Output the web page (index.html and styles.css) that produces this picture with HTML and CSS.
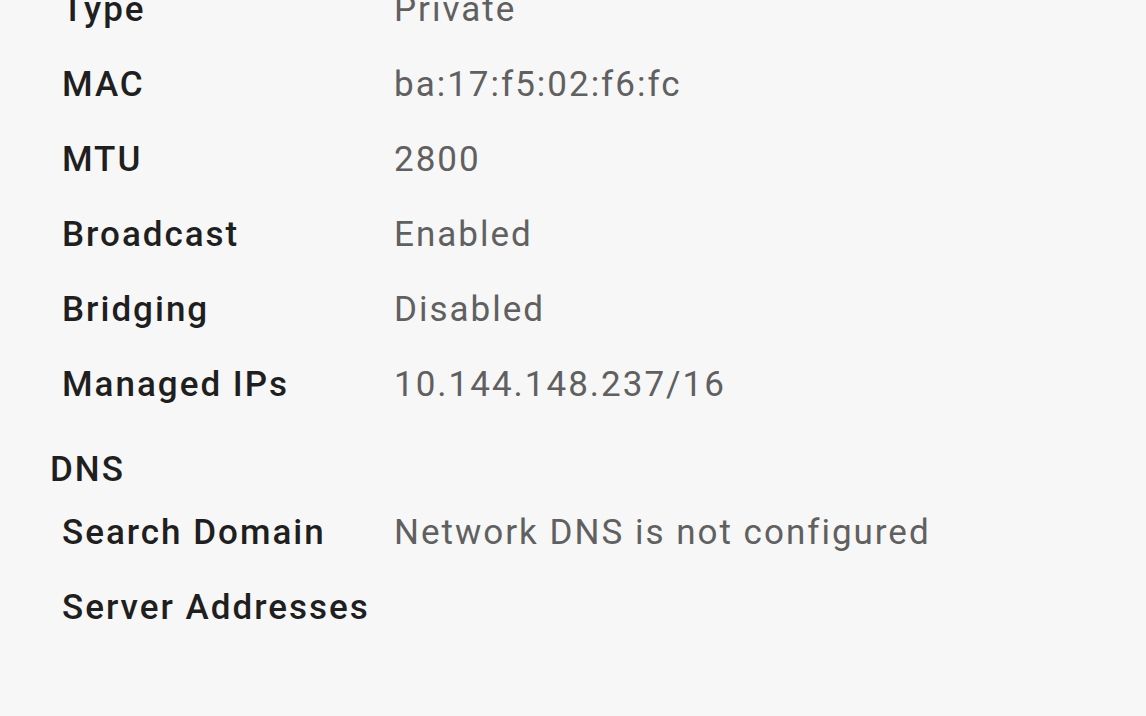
FILE: index.html
```html
<!DOCTYPE html>
<html>
<head>
<meta charset="utf-8">
<link rel="stylesheet" href="styles.css">
</head>
<body>
<div class="page">
  <dl class="props">
    <dt>Type</dt><dd>Private</dd>
    <dt>MAC</dt><dd>ba:17:f5:02:f6:fc</dd>
    <dt>MTU</dt><dd>2800</dd>
    <dt>Broadcast</dt><dd>Enabled</dd>
    <dt>Bridging</dt><dd>Disabled</dd>
    <dt>Managed IPs</dt><dd>10.144.148.237/16</dd>
  </dl>
  <h2 class="section">DNS</h2>
  <dl class="props">
    <dt>Search Domain</dt><dd>Network DNS is not configured</dd>
    <dt>Server Addresses</dt><dd></dd>
  </dl>
</div>
</body>
</html>
```

FILE: styles.css
```css
html, body {
  margin: 0;
  padding: 0;
  background: #f7f7f7;
}
body {
  font-family: Roboto, "Liberation Sans", sans-serif;
  overflow: hidden;
  height: 716px;
  letter-spacing: 2px;
}
.page {
  margin-top: -28px;
  padding-left: 50px;
}
.props {
  margin: 0;
  padding-left: 12px;
  display: grid;
  grid-template-columns: 332px 1fr;
  grid-auto-rows: 75px;
  font-size: 35px;
  line-height: 75px;
}
.props dt {
  font-weight: 500;
  color: #1f1f1f;
}
.props dd {
  margin: 0;
  color: #606060;
}
.section {
  margin: 23px 0 0 0;
  font-size: 35px;
  line-height: 50px;
  font-weight: 500;
  color: #1f1f1f;
}
```
